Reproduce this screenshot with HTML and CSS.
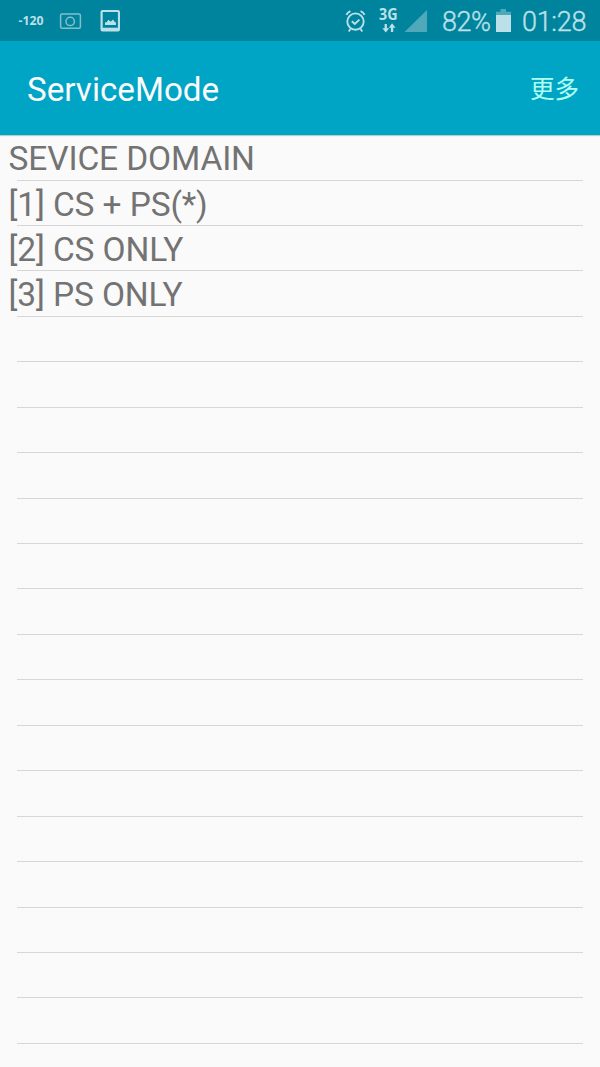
FILE: index.html
```html
<!DOCTYPE html>
<html lang="zh-CN">
<head>
<meta charset="utf-8">
<title>ServiceMode</title>
<link rel="stylesheet" href="styles.css">
</head>
<body>
<header class="status">
  <svg class="notifications" width="130" height="41" viewBox="0 0 130 41">
    <text class="signal-value" x="18.5" y="25" textLength="25" lengthAdjust="spacingAndGlyphs">-120</text>
    <g class="camera"><rect x="60.6" y="14" width="19.8" height="14.2" rx="1.5"/><circle cx="70.2" cy="21.4" r="4.2"/></g>
    <path class="solid" fill-rule="evenodd" d="M102.500 10h15.500q2 0 2 2v17.500q0 2-2 2h-15.500q-2 0-2-2v-17.500q0-2 2-2zM102.700 12v15.800h15.200V12z"/>
    <path class="solid" d="M105 25v-2.500l1.800-.5 1.700-2.300 2.200 2 2.300-2.200 1.800 2.500 1.200.5v2.500z"/>
  </svg>
  <svg class="indicators" width="110" height="41" viewBox="330 0 110 41">
    <g class="alarm"><circle cx="355.500" cy="21.600" r="8.200"/><path d="M351.800 21.200l3 2.800 4.600-4.400M346.400 14.800q1.200-2.500 4-3.600M364.600 14.800q-1.200-2.500-4-3.600M350.500 29l-1.800 2.500M360.500 29l1.800 2.500"/></g>
    <text class="network" x="379" y="20" textLength="18.500" lengthAdjust="spacingAndGlyphs">3G</text>
    <path class="solid" d="M384.600 24h2.300v4.200h2.300l-3.400 4.300-3.400-4.300h2.200zM393.200 32h-2.300v-4.300h-2.200l3.400-4.500 3.400 4.500h-2.300z"/>
    <path class="cell" d="M427 10v22h-22.500z"/>
  </svg>
  <span class="percent">82%</span>
  <svg class="battery" width="16" height="41" viewBox="495 0 16 41">
    <path class="cell" d="M500.500 9h5.500v2.700h5v3.300h-15v-3.300h4.500z"/><path class="solid" d="M496 15h15v17h-15z"/>
  </svg>
  <span class="clock">01:28</span>
</header>
<div class="toolbar"><h1 class="title">ServiceMode</h1><span class="more">更多</span></div>
<ul class="list">
  <li class="row">SEVICE DOMAIN</li>
  <li class="row">[1] CS + PS(*)</li>
  <li class="row">[2] CS ONLY</li>
  <li class="row">[3] PS ONLY</li>
  <li class="row"></li><li class="row"></li><li class="row"></li><li class="row"></li>
  <li class="row"></li><li class="row"></li><li class="row"></li><li class="row"></li>
  <li class="row"></li><li class="row"></li><li class="row"></li><li class="row"></li>
  <li class="row"></li><li class="row"></li><li class="row"></li><li class="row"></li>
</ul>
</body>
</html>
```
FILE: styles.css
```css
* { box-sizing: border-box; }
body { margin: 0; height: 1067px; overflow: hidden; background: #fafafa; font-family: Roboto, "Noto Sans CJK SC", sans-serif; }
.status { display: flex; height: 41px; background: #00849e; color: #bce0e7; font-size: 27px; font-weight: 300; line-height: 45px; white-space: nowrap; -webkit-text-stroke: 0.4px #bce0e7; }
.status svg { display: block; flex: none; -webkit-text-stroke: 0; }
.indicators { margin-left: 200px; }
.percent { width: 53px; margin-left: 2px; letter-spacing: -0.5px; }
.clock { margin-left: 11px; letter-spacing: -0.3px; }
.solid, .signal-value, .network { fill: #bce0e7; }
.cell { fill: #50a9ba; }
.signal-value { font: 700 12.500px "Open Sans", sans-serif; }
.network { font: 700 15.500px "Open Sans", sans-serif; }
.camera { fill: none; stroke: #82bfcb; stroke-width: 1.500; }
.alarm { fill: none; stroke: #bce0e7; stroke-width: 1.900; }
.toolbar { display: flex; justify-content: space-between; align-items: center; height: 94px; padding: 0 21px 0 27px; background: #00a5c5; box-shadow: 0 1px 1px #b8ccd0; }
.title { margin: 4px 0 0; color: #fafafa; font-size: 33.200px; font-weight: 400; line-height: 40px; }
.more { margin-top: 3px; color: #b0fff3; font-size: 24.500px; line-height: 36px; }
.list { margin: 0; padding: 0.100px 0 0; list-style: none; }
.row { height: 45.440px; padding-left: 8.500px; color: #737373; font-size: 33.500px; letter-spacing: -0.120px; line-height: 48.300px; white-space: nowrap; background: linear-gradient(#d6d6d6, #d6d6d6) 17px 100% / 566px 1px no-repeat; }
```
